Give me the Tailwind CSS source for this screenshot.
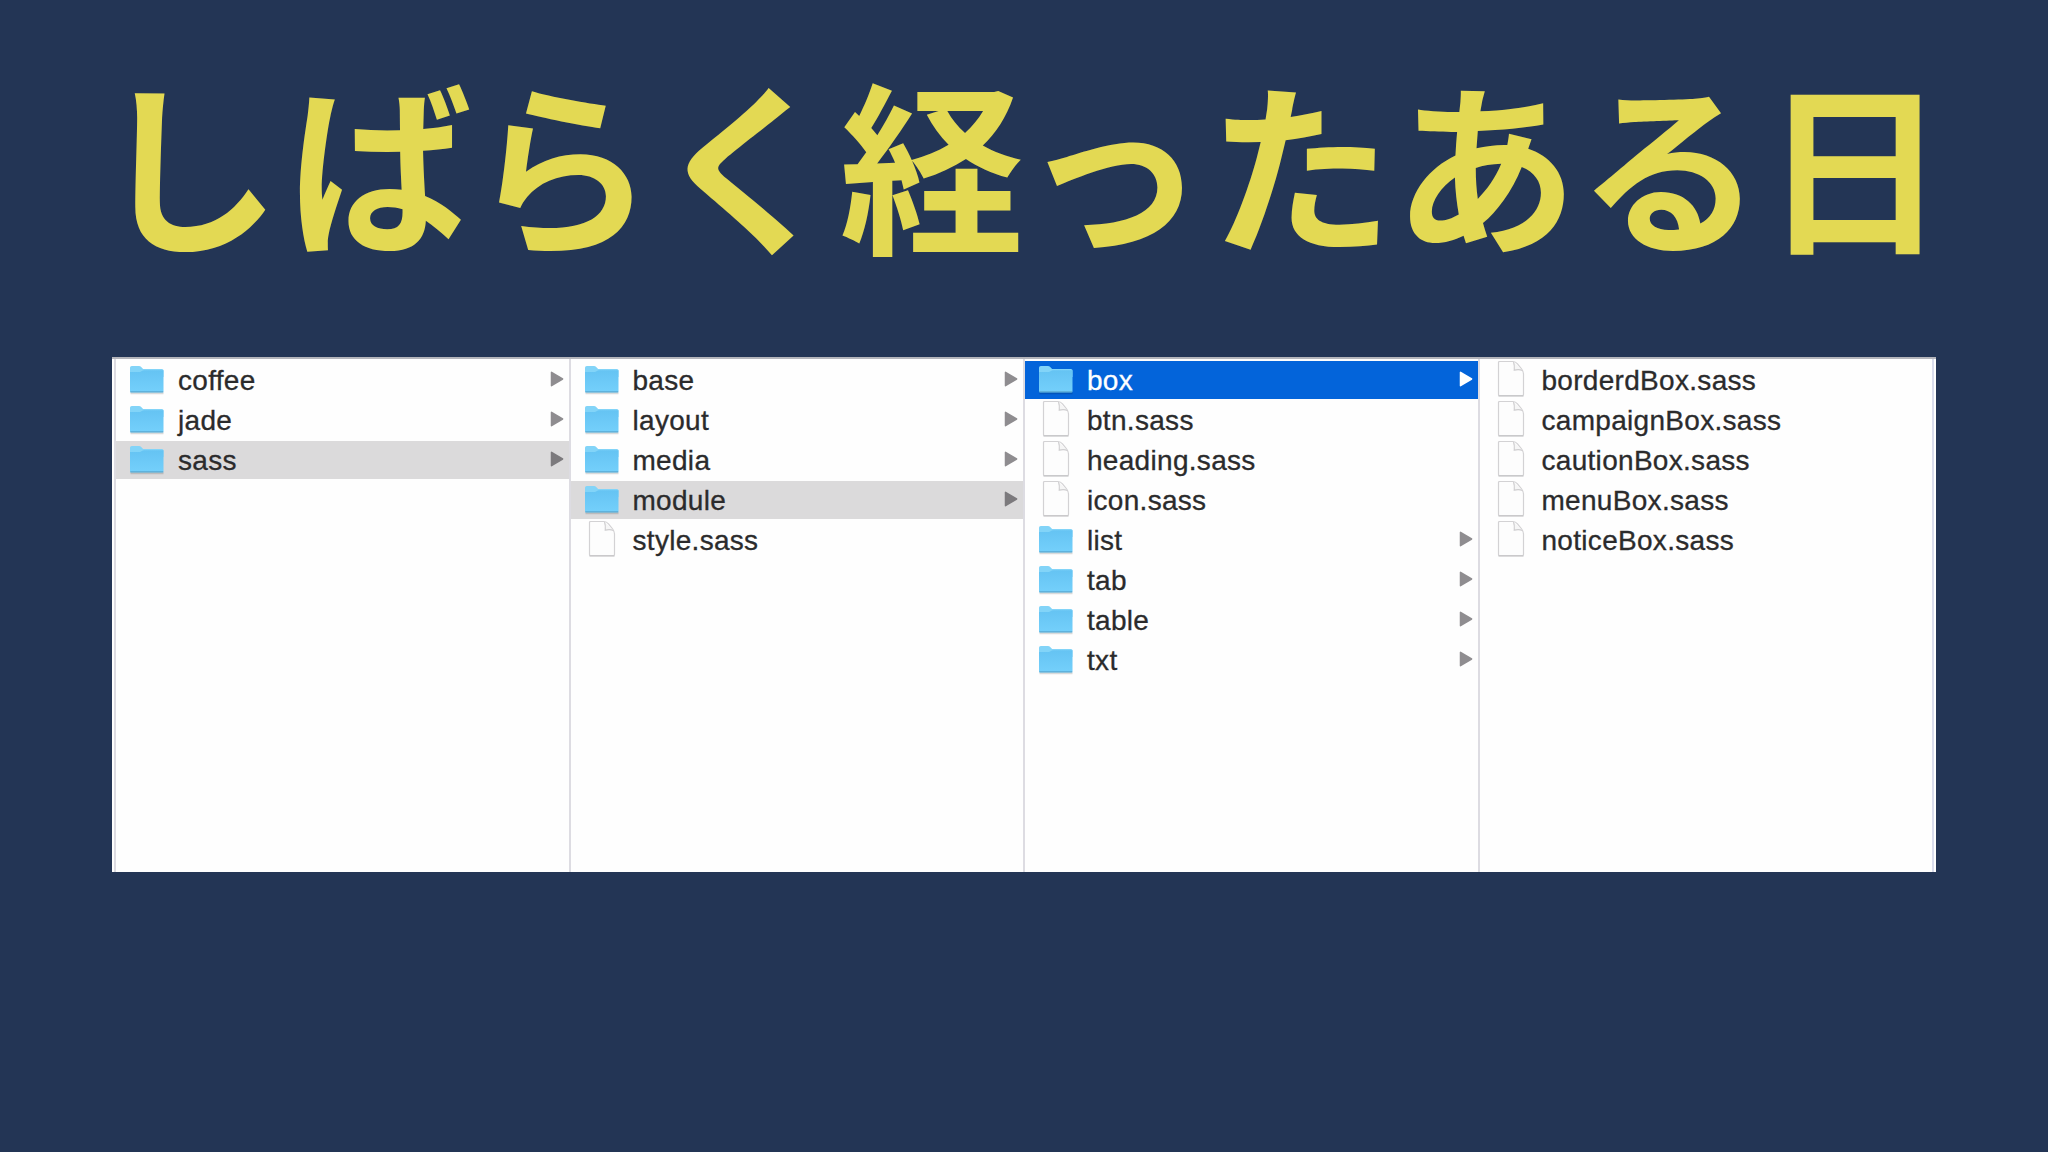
<!DOCTYPE html>
<html lang="ja">
<head>
  <meta charset="UTF-8"/>
  <meta name="viewport" content="width=device-width,initial-scale=1"/>
  <title>しばらく経ったある日</title>
  <script src="https://cdn.jsdelivr.net/npm/@tailwindcss/browser@4"></script>
</head>
<body class="h-screen overflow-hidden bg-[#233555] flex flex-col items-center">

  <!-- Icons -->
  <svg class="w-0 h-0 shrink-0">
    <defs>
      <linearGradient id="folder-fill" x1="0" y1="0" x2="0" y2="1">
        <stop offset="0" stop-color="#65c3f3"/>
        <stop offset="1" stop-color="#74d0fb"/>
      </linearGradient>
    </defs>
    <symbol id="folder" viewBox="0 0 36 30">
      <path d="M1.5 28.2h33" stroke="#000" stroke-opacity=".14" stroke-width="2"/>
      <path d="M1 2.8Q1 1 2.8 1H10q1.2 0 2 .8l1.6 1.6q.6.6 1.6.6H33q1.5 0 1.5 1.5V12H1z" fill="#82d4f8"/>
      <path d="M1 7h9.5q1.2 0 2-.7l.8-.6q.7-.5 1.7-.5h19.5V26q0 1.3-1.3 1.3H2.300Q1 27.300 1 26z" fill="url(#folder-fill)"/>
      <path d="M1.3 26.8h33" stroke="#58a9d2" stroke-width="1.2"/>
    </symbol>
    <symbol id="file" viewBox="0 0 30 38">
      <path d="M3.5 1.5H17q2.5 0 4.5 2.3l4 5Q27.5 11.5 27.5 14v20.5q0 1-1 1h-23q-1 0-1-1v-32q0-1 1-1z" fill="#fdfdfd" stroke="#d3d2d4" stroke-width="1.2"/>
      <path d="M2.5 36h25" stroke="#c4c3c5" stroke-width="1.2"/>
      <path d="M17.5 2q1.2 3 .8 8.2 4.5-1.2 8.2.3" fill="#f6f6f6" stroke="#cfced0" stroke-width="1.2"/>
    </symbol>
    <symbol id="arrow" viewBox="0 0 14 16">
      <path d="M1.5 1.3v13.4L12.600 8z" fill="currentColor" stroke="currentColor" stroke-width="1.5" stroke-linejoin="round"/>
    </symbol>
  </svg>

  <h1 class="mt-[22px] h-[335px] text-[184.6px] leading-[276px] font-bold whitespace-nowrap text-[#e3d953] font-['Noto_Sans_CJK_JP',sans-serif]"><span class="-ml-[5px] mr-[7px]">し</span><span class="-mr-[2px]">ば</span>らく経<span class="-ml-[3px] mr-[3px]">っ</span>たある日</h1>

  <!-- Finder columns -->
  <main id="finder" class="w-[1824px] h-[515px] shrink-0 flex bg-[#fefefe] border-t-2 border-[#b4b5bb] pl-[2px] text-[28px] tracking-[0.3px] text-[#2b2b2c] [-webkit-text-stroke:0.3px] font-['Liberation_Sans',sans-serif]"></main>

  <script>
    const columns = [
      { items: ['coffee/', 'jade/', 'sass/'], open: 'sass/' },
      { items: ['base/', 'layout/', 'media/', 'module/', 'style.sass'], open: 'module/' },
      { items: ['box/', 'btn.sass', 'heading.sass', 'icon.sass', 'list/', 'tab/', 'table/', 'txt/'], active: 'box/' },
      { items: ['borderdBox.sass', 'campaignBox.sass', 'cautionBox.sass', 'menuBox.sass', 'noticeBox.sass'] }
    ];

    const row = (item, col) => {
      const isDir = item.endsWith('/');
      let state = '';
      let arrow = 'text-[#8f8d90]';
      if (item === col.open) {
        state = 'bg-[#dbdadb]';
        arrow = 'text-[#7c7a7d]';
      }
      if (item === col.active) {
        state = 'bg-[#0364da] text-white';
        arrow = 'text-white';
      }
      const icon = isDir
        ? '<svg class="ml-[13px] mr-px w-9 h-[30px] mt-px"><use href="#folder"/></svg>'
        : '<svg class="ml-[16px] mr-1 w-[30px] h-[38px] -mt-px"><use href="#file"/></svg>';
      return `<li class="flex items-center h-[37.5px] ${state}">
        ${icon}
        <span class="ml-[12px] flex-1 leading-[37px] pt-[1px]">${item.replace('/', '')}</span>
        ${isDir ? `<svg class="w-[14px] h-4 mr-[5px] mb-[2px] ${arrow}"><use href="#arrow"/></svg>` : ''}
      </li>`;
    };

    document.getElementById('finder').innerHTML = columns.map(col => `
      <ul class="w-[454.5px] pt-[2px] border-l-2 border-[#dddce2] flex flex-col gap-[2.5px]">
        ${col.items.map(item => row(item, col)).join('')}
      </ul>`).join('') + '<div class="w-[2px] bg-[#d9dcec]"></div>';
  </script>
</body>
</html>
